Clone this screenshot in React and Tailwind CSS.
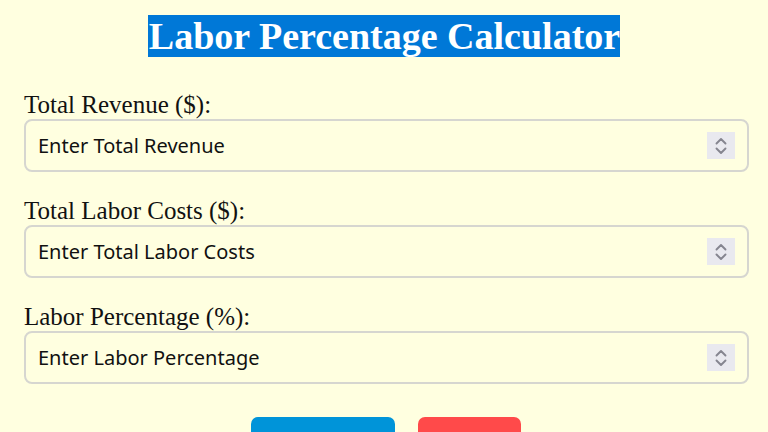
import React from "react";

function Spinner() {
  return (
    <div className="flex h-[27px] w-[28px] shrink-0 flex-col items-center justify-center bg-[#e9e9ef]">
      <svg width="14" height="22" viewBox="0 0 14 22" fill="none" stroke="#85858f" strokeWidth="1.9" strokeLinecap="round" strokeLinejoin="round">
        <path d="M2.5 8.5 L7 4 L11.5 8.5" />
        <path d="M2.5 13.5 L7 18 L11.5 13.5" />
      </svg>
    </div>
  );
}

function Field({ label, placeholder }) {
  return (
    <div className="flex flex-col">
      <label className="h-[29px] text-[25px] leading-[29px] text-[#111]" style={{ fontFamily: '"Liberation Serif", "Times New Roman", serif' }}>
        {label}
      </label>
      <div className="flex h-[53px] items-center rounded-[8px] border-2 border-[#d6d6d0] bg-[#ffffe0] pl-[12px] pr-[12px]">
        <span className="flex-1 pt-[1px] text-[20px] text-[#111]" style={{ fontFamily: '"Noto Sans", Tahoma, sans-serif' }}>
          {placeholder}
        </span>
        <Spinner />
      </div>
    </div>
  );
}

export default function App() {
  return (
    <div className="h-[432px] w-full overflow-hidden bg-[#ffffe0]">
      <div className="flex justify-center pt-[15px]">
        <h1
          className="h-[42px] bg-[#0078d7] pl-[1px] text-[38px] font-bold leading-[42px] text-white"
          style={{ fontFamily: '"Liberation Serif", "Times New Roman", serif' }}
        >
          Labor Percentage Calculator
        </h1>
      </div>
      <div className="mt-[33px] flex flex-col gap-[24px] pl-[24px] pr-[19px]">
        <Field label="Total Revenue ($):" placeholder="Enter Total Revenue" />
        <Field label="Total Labor Costs ($):" placeholder="Enter Total Labor Costs" />
        <Field label="Labor Percentage (%):" placeholder="Enter Labor Percentage" />
      </div>
      <div className="mt-[33px] flex justify-center gap-[23px] pl-[3px]">
        <button className="h-[44px] w-[144px] rounded-[7px] bg-[#0094d9]" />
        <button className="h-[44px] w-[103px] rounded-[7px] bg-[#ff4a4a]" />
      </div>
    </div>
  );
}
